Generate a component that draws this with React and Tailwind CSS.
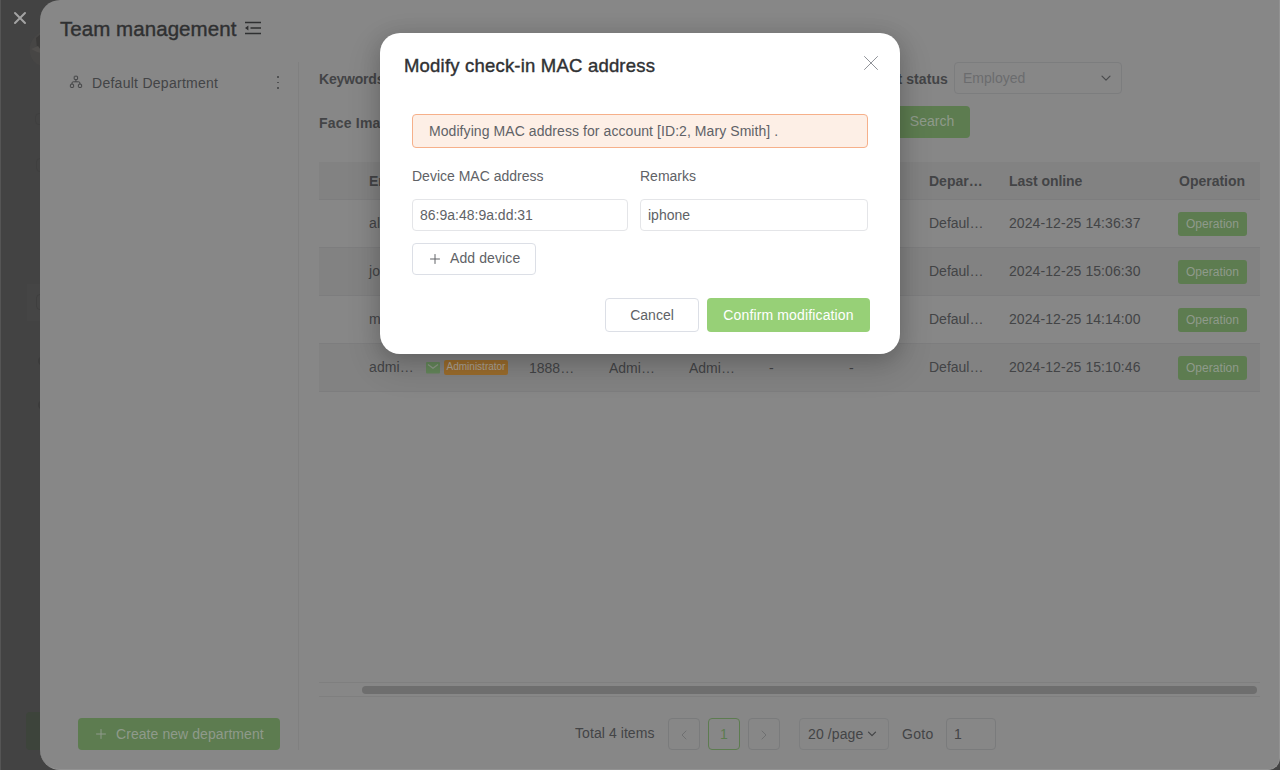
import React from "react";

const rows = [
  { name: "alice", time: "2024-12-25 14:36:37" },
  { name: "john", time: "2024-12-25 15:06:30" },
  { name: "mary", time: "2024-12-25 14:14:00" },
  { name: "admi…", time: "2024-12-25 15:10:46", admin: true },
];

const GRID = "grid grid-cols-[50px_57px_103px_80px_80px_80px_80px_80px_80px_169px_82px] items-center";

function Stroke({ d, size = 14, width = 1, className = "" }) {
  return (
    <svg width={size} height={size} viewBox={`0 0 ${size} ${size}`} fill="none" stroke="currentColor" strokeWidth={width} strokeLinecap="round" strokeLinejoin="round" className={`shrink-0 ${className}`}>
      <path d={d} />
    </svg>
  );
}

const CHEVRON_DOWN = "M3 5.2 7 9.2 11 5.2";
const PLUS = "M7 2.5v9M2.5 7h9";

function Rail() {
  return (
    <div className="relative w-10 shrink-0 overflow-hidden border-l border-[#555] bg-[#434343]">
      <Stroke size={14} width={2} d="M2 2 12 12M12 2 2 12" className="absolute left-3 top-[11px] text-[#a3a3a3]" />
      <svg className="absolute left-[27px] top-[30px]" width="22" height="38" viewBox="0 0 22 38">
        <path d="M14 1C4 7 0 16 2 23c1 7 6 12 14 14z" fill="#474645" />
        <path d="M14 3 8 8l1 10 7 4V3z" fill="#3b3a39" />
        <path d="m3 19 7-3 6 8-7-2z" fill="#504e4c" />
      </svg>
      <div className="absolute left-[26px] top-[284px] h-[37px] w-6 bg-[#454545]" />
      <div className="absolute left-[34px] top-[113px] h-3 w-3 rounded-sm border border-[#3f3f3f]" />
      <div className="absolute left-[35px] top-[158px] h-3.5 w-3 rounded-sm border border-[#3f3f3f]" />
      <div className="absolute left-[35px] top-[294px] h-4 w-3 rounded-sm border border-[#3f3f3f]" />
      <div className="absolute left-[37px] top-[356px] h-2.5 w-3 rounded-full bg-[#3c3c3c]" />
      <div className="absolute left-[37px] top-[400px] h-2.5 w-3 rounded-full bg-[#3c3c3c]" />
      <div className="absolute left-[25px] top-[712px] h-[38px] w-6 rounded-[4px] bg-[#3d443b]" />
    </div>
  );
}

function Sidebar() {
  return (
    <aside className="flex w-[259px] shrink-0 flex-col border-r border-[#808080]">
      <div className="flex h-[42px] items-center pl-[29px] pr-[14px]">
        <svg width="14" height="14" viewBox="0 0 14 14" fill="none" stroke="#434446" strokeWidth="1" className="mb-0.5 shrink-0">
          <rect x="5.2" y="1.2" width="3.4" height="3.4" rx=".6" />
          <rect x="1.4" y="9.2" width="3.2" height="3.2" rx=".6" />
          <rect x="9.4" y="9.2" width="3.2" height="3.2" rx=".6" />
          <path d="M6.9 4.6v2.2M3 9.2V8a1.2 1.2 0 0 1 1.2-1.2h5.5A1.2 1.2 0 0 1 10.9 8v1.2" />
        </svg>
        <span className="ml-[9px] tracking-[0.27px]">Default Department</span>
        <div className="ml-auto flex w-[12px] flex-col items-center gap-[4px] pb-px">
          <i className="size-[1.5px] bg-[#505152]" />
          <i className="size-[1.5px] bg-[#505152]" />
          <i className="size-[1.5px] bg-[#505152]" />
        </div>
      </div>
      <button className="ml-[38px] mt-auto flex h-8 w-[202px] items-center rounded-[4px] bg-[#5d7c50] pb-px pl-4 tracking-[0.07px] text-[#8f9a8b]">
        <Stroke d={PLUS} className="mt-px" />
        <span className="ml-2">Create new department</span>
      </button>
    </aside>
  );
}

function Filters() {
  return (
    <div className="flex w-[803px] flex-col gap-3">
      <div className="flex h-8 items-center">
        <b className="pt-0.5 tracking-[-0.2px]">Keywords</b>
        <b className="ml-auto pt-0.5 tracking-[0.1px]">Employment status</b>
        <div className="ml-1.5 flex h-8 w-[168px] items-center justify-between rounded-[4px] border border-[#7c7d7e] px-2 text-[#6b6c6e]">
          <span>Employed</span>
          <Stroke d={CHEVRON_DOWN} width={1.2} className="text-[#4a4b4d]" />
        </div>
      </div>
      <div className="flex h-8 items-center pr-[152px]">
        <b className="pt-0.5 tracking-[0.2px]">Face Image</b>
        <button className="ml-auto h-8 w-[76px] rounded-[4px] bg-[#5d7c50] pb-0.5 text-[#8f9a8b]">Search</button>
      </div>
    </div>
  );
}

function Row({ row, striped }) {
  return (
    <div className={`${GRID} h-12 border-b border-[#7d7d7e] ${striped ? "bg-[#828282]" : ""}`}>
      <span />
      <span className="pb-px tracking-[0.1px]">{row.name}</span>
      {row.admin ? (
        <span className="flex items-center gap-[4px]">
          <svg width="14" height="12" viewBox="0 0 14 12" className="mt-px shrink-0">
            <rect width="14" height="11.5" rx="1" fill="#64865a" />
            <path d="m2 2.6 5 3.6 5-3.6" fill="none" stroke="#8e9889" strokeWidth="1.2" />
          </svg>
          <span className="flex h-[15px] w-16 items-center justify-center rounded-[2px] bg-[#9a6c2d] pb-px text-[10px] text-[#aaa398]">Administrator</span>
        </span>
      ) : (
        <span />
      )}
      <span>{row.admin && "1888…"}</span>
      <span>{row.admin && "Admi…"}</span>
      <span>{row.admin && "Admi…"}</span>
      <span>{row.admin && "-"}</span>
      <span>{row.admin && "-"}</span>
      <span className="pb-px">Defaul…</span>
      <span className="pb-px tracking-[0.08px]">{row.time}</span>
      <button className="mt-px h-6 w-[69px] rounded-[3px] bg-[#5d7c50] text-[12px] tracking-[0.05px] text-[#8f9a8b]">Operation</button>
    </div>
  );
}

function Table() {
  return (
    <div className="mt-6 flex h-[535px] w-[941px] flex-col">
      <div className={`${GRID} h-[38px] border-b border-[#7d7d7e] bg-[#828282] font-bold`}>
        <span />
        <span className="col-span-7">Em…</span>
        <span>Depar…</span>
        <span className="tracking-[-0.05px]">Last online</span>
        <span className="pl-px">Operation</span>
      </div>
      {rows.map((row, i) => (
        <Row key={row.time} row={row} striped={i % 2 === 1} />
      ))}
      <div className="mt-auto h-[15px] border-y border-[#7f7f7f] pl-[43px] pr-[3px] pt-[3px]">
        <div className="h-2 rounded-full bg-[#6e6e6e]" />
      </div>
    </div>
  );
}

function Pagination() {
  return (
    <div className="mt-auto flex h-8 items-center pl-[256px]">
      <span className="w-[93px] pb-0.5 tracking-[0.07px]">Total 4 items</span>
      <div className="flex gap-2">
        <span className="flex size-8 items-center justify-center rounded-[4px] border border-[#7a7b7c] text-[#6f7071]">
          <Stroke size={12} d="M8 2 4 6l4 4" className="mt-px" />
        </span>
        <span className="flex size-8 items-center justify-center rounded-[4px] border border-[#5d7c50] text-[#5d7c50]">1</span>
        <span className="flex size-8 items-center justify-center rounded-[4px] border border-[#7a7b7c] text-[#6f7071]">
          <Stroke size={12} d="m4 2 4 4-4 4" className="mt-px" />
        </span>
      </div>
      <div className="ml-[19px] flex h-8 w-[90px] items-center rounded-[4px] border border-[#7d7e7f] pl-2">
        <span className="w-[58px] whitespace-nowrap tracking-[0.1px]">20 /page</span>
        <Stroke size={12} width={1.2} d="M2.5 4.2 6 7.7l3.5-3.5" />
      </div>
      <span className="ml-[13px] w-[44px] tracking-[0.3px]">Goto</span>
      <span className="flex h-8 w-[50px] items-center rounded-[4px] border border-[#7a7b7c] pl-[7px]">1</span>
    </div>
  );
}

function Modal() {
  return (
    <div className="absolute left-[380px] top-[33px] flex h-[321px] w-[520px] flex-col rounded-[20px] bg-white px-8 pb-[22px] text-[#606266] shadow-[0_12px_32px_4px_rgba(0,0,0,0.12),0_4px_20px_rgba(0,0,0,0.16)]">
      <div className="-ml-2 -mr-[11px] flex h-[65px] items-center justify-between">
        <h2 className="text-[18.5px] tracking-[0.2px] text-[#303133] [-webkit-text-stroke:0.4px_#303133]">Modify check-in MAC address</h2>
        <Stroke size={16} d="M1.5 1.5l13 13M14.5 1.5l-13 13" className="mb-[5px] text-[#909399]" />
      </div>
      <div className="mt-4 flex h-[34px] items-center rounded-[4px] border border-[#f6b08a] bg-[#fdefe6] pl-4 tracking-[0.07px]">
        Modifying MAC address for account [ID:2, Mary Smith] .
      </div>
      <div className="mt-[18px] grid grid-cols-[216px_228px] gap-x-3">
        <span className="h-[33px] leading-[21px]">Device MAC address</span>
        <span className="h-[33px] leading-[21px]">Remarks</span>
        <div className="flex h-8 items-center rounded-[4px] border border-[#e4e5e8] pl-[7px]">86:9a:48:9a:dd:31</div>
        <div className="flex h-8 items-center rounded-[4px] border border-[#e4e5e8] pl-[7px]">iphone</div>
      </div>
      <button className="mt-3 flex h-8 w-[124px] items-center rounded-[4px] border border-[#dcdfe6] pl-[15px]">
        <Stroke d={PLUS} />
        <span className="ml-2 pb-0.5 tracking-[0.1px]">Add device</span>
      </button>
      <div className="-mr-[2px] mt-auto flex justify-end gap-2">
        <button className="h-[34px] w-[94px] rounded-[4px] border border-[#dcdfe6]">Cancel</button>
        <button className="h-[34px] w-[163px] rounded-[4px] bg-[#97d077] tracking-[0.14px] text-white">Confirm modification</button>
      </div>
    </div>
  );
}

export default function App() {
  return (
    <div className="relative h-[770px] w-[1280px] overflow-hidden bg-[#434343] font-['Liberation_Sans',Arial,sans-serif] text-[14px] leading-[20px] text-[#434446]">
      <div className="flex h-full">
        <Rail />
        <main className="flex flex-1 flex-col rounded-[20px_0_12px_20px] border-b border-r border-[#929292] bg-[#878787]">
          <header className="flex h-[62px] items-start gap-[9px] pl-5 pt-[15px]">
            <h1 className="w-[175px] whitespace-nowrap text-[20.5px] leading-7 tracking-[0.06px] text-[#2f3031] [-webkit-text-stroke:0.4px_#2f3031]">Team management</h1>
            <svg width="18" height="16" viewBox="0 0 18 16" className="mt-[5px]">
              <path d="M1 2.5h16M6.5 8H17M1 13.5h16" stroke="#2f3031" strokeWidth="1.3" />
              <path d="M1 8l3.4-2.4v4.8z" fill="#2f3031" />
            </svg>
          </header>
          <div className="flex h-[688px]">
            <Sidebar />
            <section className="flex flex-1 flex-col pl-5">
              <Filters />
              <Table />
              <Pagination />
            </section>
          </div>
        </main>
      </div>
      <Modal />
    </div>
  );
}
